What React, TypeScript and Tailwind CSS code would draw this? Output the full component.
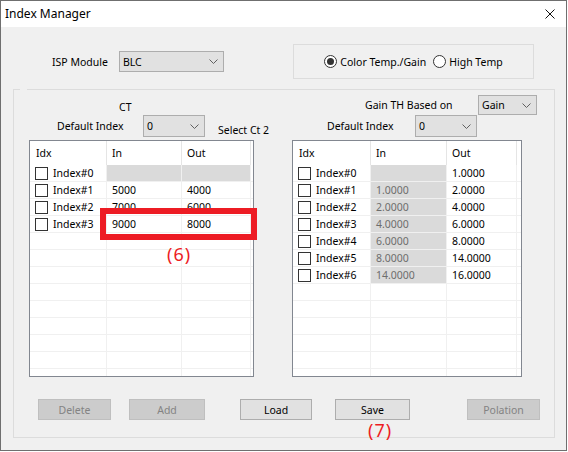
import React from "react"

type Row = { label?: string; a?: string; b?: string; grayA?: boolean; grayB?: boolean }

const ctRows: Row[] = [
  { label: "Index#0", a: "", b: "", grayA: true, grayB: true },
  { label: "Index#1", a: "5000", b: "4000" },
  { label: "Index#2", a: "7000", b: "6000" },
  { label: "Index#3", a: "9000", b: "8000" },
]

const gainRows: Row[] = [
  { label: "Index#0", a: "", b: "1.0000", grayA: true },
  { label: "Index#1", a: "1.0000", b: "2.0000", grayA: true },
  { label: "Index#2", a: "2.0000", b: "4.0000", grayA: true },
  { label: "Index#3", a: "4.0000", b: "6.0000", grayA: true },
  { label: "Index#4", a: "6.0000", b: "8.0000", grayA: true },
  { label: "Index#5", a: "8.0000", b: "14.0000", grayA: true },
  { label: "Index#6", a: "14.0000", b: "16.0000", grayA: true },
]

function Chevron() {
  return (
    <svg width="9" height="5" viewBox="0 0 9 5" className="shrink-0">
      <polyline points="0.5,0.5 4.5,4.5 8.5,0.5" fill="none" stroke="#606060" strokeWidth="1" />
    </svg>
  )
}

function Combo({ value, className }: { value: string; className: string }) {
  return (
    <div
      className={`flex shrink-0 items-center justify-between border border-[#adadad] bg-[#e1e1e1] pl-[3px] pr-[5px] text-black ${className}`}
    >
      <span>{value}</span>
      <Chevron />
    </div>
  )
}

function Radio({ checked, label }: { checked?: boolean; label: string }) {
  return (
    <div className="flex items-center gap-[3px]">
      <span className="flex h-[13px] w-[13px] items-center justify-center rounded-full border border-[#333] bg-white">
        {checked && <span className="h-[7px] w-[7px] rounded-full bg-[#333]" />}
      </span>
      <span>{label}</span>
    </div>
  )
}

function Check() {
  return <span className="h-[13px] w-[13px] shrink-0 border border-[#333] bg-white" />
}

function Button({ label, disabled, className }: { label: string; disabled?: boolean; className: string }) {
  return (
    <div
      className={`flex h-[21px] shrink-0 items-center justify-center border ${
        disabled ? "border-[#bfbfbf] bg-[#cccccc] text-[#838383]" : "border-[#adadad] bg-[#e1e1e1] text-black"
      } ${className}`}
    >
      {label}
    </div>
  )
}

function IndexGrid({ rows, cols, className }: { rows: Row[]; cols: string[]; className: string }) {
  const body: Row[] = [...rows]
  while (body.length < 13) body.push({})
  return (
    <div className={`h-[237px] shrink-0 overflow-hidden border border-[#828790] bg-white ${className}`}>
      <div className="flex h-[24px]">
        <div className={`flex shrink-0 items-center border-r border-[#e5e5e5] pl-[6px] ${cols[0]}`}>Idx</div>
        <div className={`flex shrink-0 items-center border-r border-[#e5e5e5] pl-[5px] ${cols[1]}`}>In</div>
        <div className={`flex shrink-0 items-center border-r border-[#e5e5e5] pl-[5px] ${cols[2]}`}>Out</div>
        <div className={`shrink-0 ${cols[3]}`} />
      </div>
      {body.map((r, i) => (
        <div key={i} className="flex h-[17px] border-b border-[#f0f0f0]">
          <div className={`flex shrink-0 items-center gap-[5px] border-r border-[#f0f0f0] pl-[5px] ${cols[0]}`}>
            {r.label && (
              <>
                <Check />
                <span>{r.label}</span>
              </>
            )}
          </div>
          <div
            className={`flex shrink-0 items-center border-r border-[#f0f0f0] pl-[5px] ${cols[1]} ${
              r.grayA ? "bg-[#dadada] text-[#6d6d6d]" : ""
            }`}
          >
            {r.a}
          </div>
          <div
            className={`flex shrink-0 items-center border-r border-[#f0f0f0] pl-[5px] ${cols[2]} ${
              r.grayB ? "bg-[#dadada]" : ""
            }`}
          >
            {r.b}
          </div>
          <div className={`shrink-0 ${cols[3]}`} />
        </div>
      ))}
    </div>
  )
}

export default function App() {
  return (
    <div className="h-[452px] w-[568px] bg-white font-['Segoe_UI','Noto_Sans',sans-serif] text-[10.5px] leading-[14px] text-black">
      <div className="flex h-[451px] w-[567px] flex-col border border-[#6f6f6f]">
        {/* title bar */}
        <div className="flex h-[26px] shrink-0 items-center justify-between bg-white pl-[4px] pr-[11px]">
          <span className="text-[12px]">Index Manager</span>
          <svg width="10" height="10" viewBox="0 0 10 10">
            <path d="M0.5 0.5 L9.5 9.5 M9.5 0.5 L0.5 9.5" stroke="#111" strokeWidth="1" />
          </svg>
        </div>

        <div className="flex-1 bg-[#f0f0f0]">
          {/* module + mode */}
          <div className="mt-[17px] flex items-center">
            <span className="ml-[51px] w-[67px] shrink-0">ISP Module</span>
            <Combo value="BLC" className="h-[21px] w-[105px]" />
            <div className="ml-[69px] flex h-[35px] w-[241px] shrink-0 items-center justify-center gap-[7px] border border-[#dcdcdc]">
              <Radio checked label="Color Temp./Gain" />
              <Radio label="High Temp" />
            </div>
          </div>

          {/* index group */}
          <div className="relative ml-[12px] mt-[10px] h-[349px] w-[542px] border border-[#dcdcdc] pl-[15px]">
            <span className="absolute left-[6px] top-[-1px] h-[1px] w-[7px] bg-[#f0f0f0]" />

            <div className="flex gap-[38px]">
              {/* color temperature */}
              <div className="flex w-[225px] shrink-0 flex-col">
                <div className="flex h-[25px] items-end pb-[1px]">
                  <span className="ml-[90px]">CT</span>
                </div>
                <div className="flex h-[22px] items-center">
                  <span className="ml-[28px] w-[86px] shrink-0">Default Index</span>
                  <Combo value="0" className="h-[22px] w-[62px]" />
                  <span className="ml-[13px] mt-[8px] shrink-0 whitespace-nowrap">Select Ct 2</span>
                </div>
                <IndexGrid
                  rows={ctRows}
                  cols={["w-[77px]", "w-[75px]", "w-[69px]", "w-[2px]"]}
                  className="mt-[3px] w-[225px]"
                />
              </div>

              {/* gain */}
              <div className="flex w-[230px] shrink-0 flex-col pt-[5px]">
                <div className="flex h-[20px] items-center">
                  <span className="ml-[73px] w-[113px] shrink-0">Gain TH Based on</span>
                  <Combo value="Gain" className="h-[20px] w-[59px]" />
                </div>
                <div className="flex h-[22px] items-center">
                  <span className="ml-[35px] w-[88px] shrink-0">Default Index</span>
                  <Combo value="0" className="h-[22px] w-[62px]" />
                </div>
                <IndexGrid
                  rows={gainRows}
                  cols={["w-[78px]", "w-[76px]", "w-[70px]", "w-[4px]"]}
                  className="mt-[3px] w-[230px]"
                />
              </div>
            </div>

            <div className="mt-[22px] flex">
              <Button label="Delete" disabled className="ml-[9px] w-[73px]" />
              <Button label="Add" disabled className="ml-[18px] w-[76px]" />
              <Button label="Load" className="ml-[35px] w-[72px]" />
              <Button label="Save" className="ml-[23px] w-[75px]" />
              <Button label="Polation" disabled className="ml-[57px] w-[73px]" />
            </div>

            {/* callouts */}
            <div className="absolute left-[86px] top-[118px] h-[32px] w-[157px] border-[6px] border-[#ed1c24]" />
            <span className="absolute left-[153px] top-[154px] text-[18px] leading-[20px] tracking-[1px] text-[#ed1c24]">
              (6)
            </span>
            <span className="absolute left-[354px] top-[330px] text-[18px] leading-[20px] tracking-[1px] text-[#ed1c24]">
              (7)
            </span>
          </div>
        </div>
      </div>
    </div>
  )
}
